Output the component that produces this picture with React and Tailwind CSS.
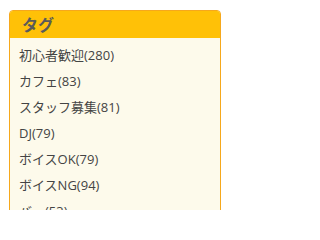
const tags = [
  ["初心者歓迎", 280],
  ["カフェ", 83],
  ["スタッフ募集", 81],
  ["DJ", 79],
  ["ボイスOK", 79],
  ["ボイスNG", 94],
  ["バー", 53],
];

export default function App() {
  return (
    <div
      className="bg-white w-[227px] h-[210px] overflow-hidden pt-[10px] pl-[9px] pr-[6px]"
      style={{ fontFamily: '"Open Sans", "Noto Sans CJK JP", sans-serif' }}
    >
      <div className="border border-[#f6a81c] rounded-t-[4px] bg-[#fdfaeb]">
        <div className="bg-[#ffc107] h-[27px] pl-[12px] flex items-center rounded-t-[3px]">
          <h3 className="text-[16px] font-bold text-[#5a5a5a] leading-none">タグ</h3>
        </div>
        <ul className="pt-[4px] pl-[9px]">
          {tags.map(([name, count]) => (
            <li key={name} className="text-[13px] leading-[26px] text-[#444]">
              {name}({count})
            </li>
          ))}
        </ul>
      </div>
    </div>
  );
}
